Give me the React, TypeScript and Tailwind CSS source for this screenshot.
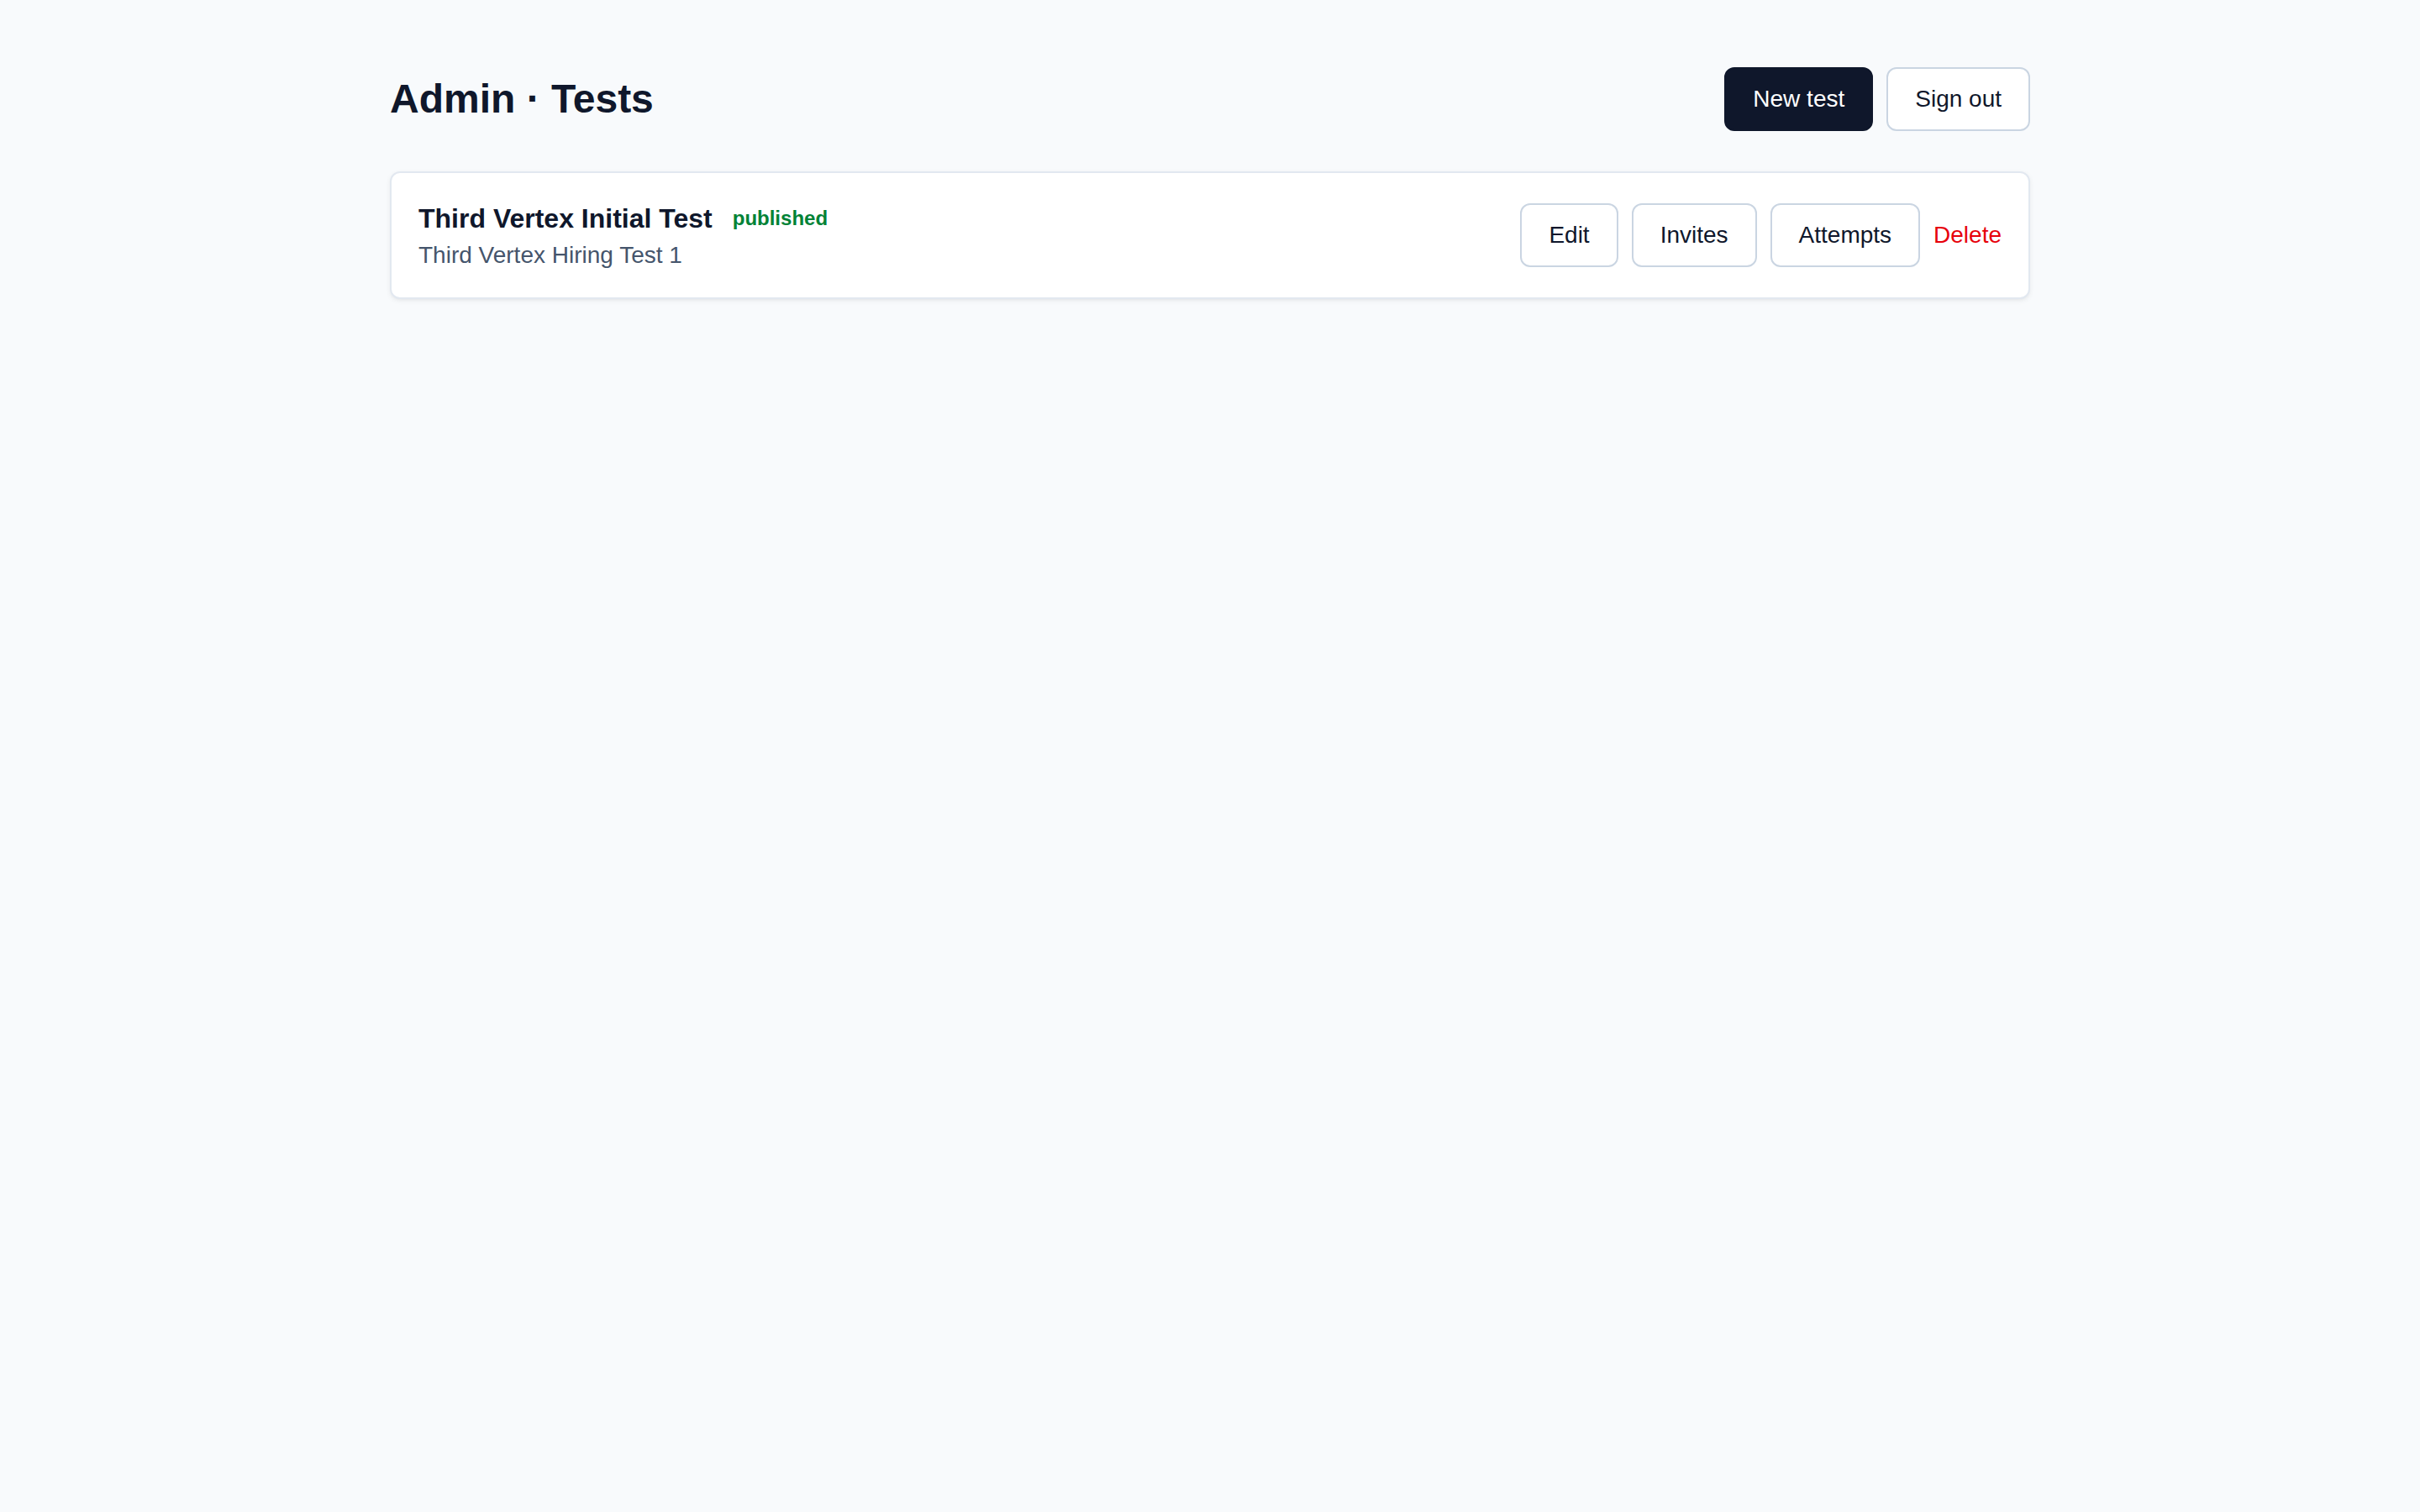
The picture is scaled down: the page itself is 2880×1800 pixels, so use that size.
export default function App() {
  const tests = [
    {
      id: "tv-initial",
      title: "Third Vertex Initial Test",
      description: "Third Vertex Hiring Test 1",
      status: "published",
    },
  ];

  return (
    <div className="min-h-screen bg-slate-50 font-['Liberation_Sans',Arial,sans-serif] text-slate-900">
      <div className="mx-auto max-w-[2048px] px-12 py-20">
        <header className="flex items-center justify-between">
          <h1 className="text-[48px] leading-[64px] font-bold">Admin · Tests</h1>
          <div className="flex items-center gap-4">
            <button className="rounded-xl border-2 border-slate-900 bg-slate-900 px-8 py-4 text-[28px] leading-[40px] text-white">
              New test
            </button>
            <button className="rounded-xl border-2 border-slate-300 bg-white px-8 py-4 text-[28px] leading-[40px] text-slate-900">
              Sign out
            </button>
          </div>
        </header>

        <ul className="mt-12 space-y-6">
          {tests.map((t) => (
            <li
              key={t.id}
              className="flex items-center justify-between rounded-xl border-2 border-slate-200 bg-white px-8 py-[30px] shadow-[0_2px_6px_0_rgb(0_0_0/0.06),0_2px_4px_-2px_rgb(0_0_0/0.06)]"
            >
              <div>
                <div className="flex items-center gap-6">
                  <h2 className="text-[32px] leading-[48px] font-bold">{t.title}</h2>
                  <span className="text-[24px] leading-[32px] font-semibold text-green-700">
                    {t.status}
                  </span>
                </div>
                <p className="text-[28px] leading-[40px] text-slate-600">{t.description}</p>
              </div>
              <div className="flex items-center gap-4">
                <button className="rounded-xl border-2 border-slate-300 bg-white px-8 py-4 text-[28px] leading-[40px]">
                  Edit
                </button>
                <button className="rounded-xl border-2 border-slate-300 bg-white px-8 py-4 text-[28px] leading-[40px]">
                  Invites
                </button>
                <button className="rounded-xl border-2 border-slate-300 bg-white px-8 py-4 text-[28px] leading-[40px]">
                  Attempts
                </button>
                <button className="text-[28px] leading-[40px] text-red-600">Delete</button>
              </div>
            </li>
          ))}
        </ul>
      </div>
    </div>
  );
}
